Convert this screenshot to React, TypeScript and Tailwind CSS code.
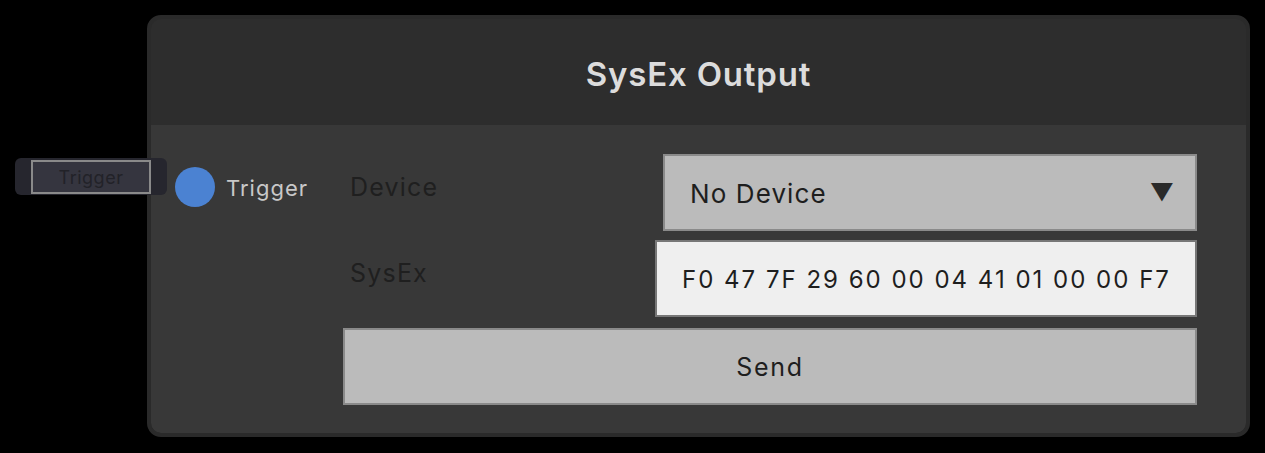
const App = () => {
    return (
        <div
            className="relative w-[1265px] h-[453px] bg-black pt-[15px] pl-[147px]"
            style={{ fontFamily: "Inter, 'Noto Sans', sans-serif" }}
        >
            <div className="w-[1103px] h-[422px] rounded-[14px] border-4 border-[#2a2a2a] bg-[#2d2d2d] flex flex-col overflow-hidden">
                <div className="h-[106px] flex items-center justify-center pt-[6px]">
                    <span className="text-[33px] font-semibold text-[#dcdcdc] tracking-[0.8px]">
                        SysEx Output
                    </span>
                </div>

                <div className="flex-1 bg-[#383838] rounded-b-[10px] flex pt-[29px] pr-[49px]">
                    {/* inputs */}
                    <div className="w-[192px] pl-[24px] pt-[13px]">
                        <div className="flex items-center gap-[11px]">
                            <div className="w-[40px] h-[40px] rounded-full bg-[#4b82d2]" />
                            <span className="text-[22px] text-[#c8c8c8] tracking-[1px] pt-[2px]">Trigger</span>
                        </div>
                    </div>

                    <div className="flex-1 flex flex-col">
                        <div className="h-[77px] flex items-center justify-between">
                            <span className="pl-[7px] pb-[10px] text-[25px] text-[#1f1f1f] tracking-[1.2px]">Device</span>
                            <div className="w-[534px] h-[77px] bg-[#bbbbbb] border-2 border-[#8a8a8a] flex items-center justify-between pl-[25px] pr-[21px]">
                                <span className="text-[26px] text-[#1e1e1e] tracking-[1.1px] pt-[2px]">No Device</span>
                                <span className="text-[24px] text-[#2a2a2a]">▼</span>
                            </div>
                        </div>

                        <div className="mt-[9px] h-[77px] flex items-center justify-between">
                            <span className="pl-[7px] pb-[10px] text-[25px] text-[#1f1f1f] tracking-[1.2px]">SysEx</span>
                            <div className="w-[542px] h-[77px] bg-[#efefef] border-2 border-[#777777] flex items-center pl-[25px]">
                                <span className="text-[24px] text-[#1e1e1e] tracking-[2px] pt-[2px]">F0 47 7F 29 60 00 04 41 01 00 00 F7</span>
                            </div>
                        </div>

                        <button className="mt-[11px] h-[77px] bg-[#bbbbbb] border-2 border-[#8a8a8a] flex items-center justify-center text-[25px] text-[#1e1e1e] tracking-[1.7px] pt-[2px]">
                            Send
                        </button>
                    </div>
                </div>
            </div>

            {/* trigger pill */}
            <div className="absolute left-[15px] top-[158px] w-[152px] h-[37px] rounded-[6px] bg-[#26262e]">
                <div className="absolute left-[16px] top-[2px] w-[120px] h-[34px] border-2 border-[#8a8a8a] bg-[#35353f] flex items-center justify-center text-[18px] text-[#222228] tracking-[0.5px]">
                    Trigger
                </div>
            </div>
        </div>
    );
};

export default App;
